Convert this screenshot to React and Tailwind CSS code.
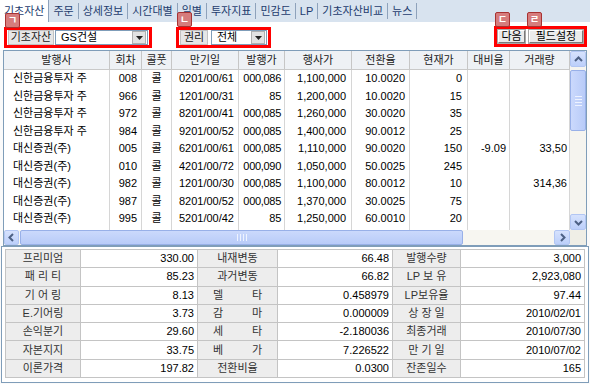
import React from 'react';

const tabs = ['기초자산', '주문', '상세정보', '시간대별', '일별', '투자지표', '민감도', 'LP', '기초자산비교', '뉴스'];

const colDefs = [
  { label: '발행사', w: 'w-[106px]', cell: 'justify-start pl-[9px]' },
  { label: '회차', w: 'w-[32px]', cell: 'justify-end pr-[4px]' },
  { label: '콜풋', w: 'w-[30px]', cell: 'justify-center' },
  { label: '만기일', w: 'w-[67px]', cell: 'justify-end pr-[4px]' },
  { label: '발행가', w: 'w-[46px]', cell: 'justify-end pr-[3px] tracking-[-0.3px]' },
  { label: '행사가', w: 'w-[67px]', cell: 'justify-end pr-[5px]' },
  { label: '전환율', w: 'w-[58px]', cell: 'justify-end pr-[4px]' },
  { label: '현재가', w: 'w-[58px]', cell: 'justify-end pr-[5px]' },
  { label: '대비율', w: 'w-[42px]', cell: 'justify-end pr-[3px]' },
  { label: '거래량', w: 'w-[60px]', cell: 'justify-end pr-[2px]' },
];

const rows = [
  ['신한금융투자 주', '008', '콜', '0201/00/61', '000,086', '1,100,000', '10.0020', '0', '', ''],
  ['신한금융투자 주', '966', '콜', '1201/00/31', '85', '1,200,000', '10.0020', '15', '', ''],
  ['신한금융투자 주', '972', '콜', '8201/00/41', '000,085', '1,260,000', '30.0020', '35', '', ''],
  ['신한금융투자 주', '984', '콜', '9201/00/52', '000,085', '1,400,000', '90.0012', '25', '', ''],
  ['대신증권(주)', '005', '콜', '6201/00/61', '000,085', '1,110,000', '90.0020', '150', '-9.09', '33,50'],
  ['대신증권(주)', '010', '콜', '4201/00/72', '000,090', '1,050,000', '50.0025', '245', '', ''],
  ['대신증권(주)', '982', '콜', '1201/00/30', '000,085', '1,100,000', '80.0012', '10', '', '314,36'],
  ['대신증권(주)', '987', '콜', '8201/00/52', '000,085', '1,370,000', '30.0025', '75', '', ''],
  ['대신증권(주)', '995', '콜', '5201/00/42', '85', '1,250,000', '60.0010', '20', '', ''],
  ['', '', '', '', '', '', '', '', '', ''],
];

const info = [
  ['프리미엄', '330.00', '내재변동', '66.48', '발행수량', '3,000'],
  ['패 리 티', '85.23', '과거변동', '66.82', 'LP 보 유', '2,923,080'],
  ['기 어 링', '8.13', ['델', '타'], '0.458979', 'LP보유율', '97.44'],
  ['E.기어링', '3.73', ['감', '마'], '0.000009', '상 장 일', '2010/02/01'],
  ['손익분기', '29.60', ['세', '타'], '-2.180036', '최종거래', '2010/07/30'],
  ['자본지지', '33.75', ['베', '가'], '7.226522', '만 기 일', '2010/07/02'],
  ['이론가격', '197.82', '전환비율', '0.0300', '잔존일수', '165'],
];

function Tri() {
  return (
    <svg width="7" height="4" viewBox="0 0 7 4">
      <path d="M0 0h7L3.5 4z" fill="#222" />
    </svg>
  );
}

function Combo({ text, w }) {
  return (
    <div className={`flex h-full items-center border border-[#7f9db9] bg-white ${w}`}>
      <span className="flex-1 whitespace-nowrap pl-[5px] text-[11px] leading-none text-black">{text}</span>
      <div className="mr-[1px] flex h-[13px] w-[14px] items-center justify-center border border-[#b0b0b0] bg-[#e2e2e2]">
        <Tri />
      </div>
    </div>
  );
}

function Badge({ ch, pos }) {
  return (
    <div
      className={`absolute flex h-[15px] w-[15px] items-center justify-center rounded-[2px] border border-[#a83232] bg-[#d67c7c] text-[10px] font-bold leading-none text-white ${pos}`}
    >
      {ch}
    </div>
  );
}

function Label({ text, w }) {
  return (
    <div className={`flex h-full items-center justify-center border border-[#c2c2c2] bg-[#e6e6e6] text-[11px] leading-none text-[#222] ${w}`}>
      {text}
    </div>
  );
}

function Btn({ text, w }) {
  return (
    <div
      className={`flex h-full items-center justify-center border border-t-[#ffffff] border-l-[#ffffff] border-r-[#7a7a7a] border-b-[#7a7a7a] bg-[#ebebeb] text-[11px] leading-none text-black shadow-[0_0_0_1px_#a8a8a8] ${w}`}
    >
      {text}
    </div>
  );
}

function Chevron({ dir }) {
  const d = {
    up: 'M3 8 L6.5 4.5 L10 8',
    down: 'M3 5 L6.5 8.5 L10 5',
    left: 'M8 3 L4.5 6.5 L8 10',
    right: 'M5 3 L8.5 6.5 L5 10',
  }[dir];
  return (
    <svg width="13" height="13" viewBox="0 0 13 13">
      <path d={d} fill="none" stroke="#4d6185" strokeWidth="2" />
    </svg>
  );
}

function SBtn({ dir, cls }) {
  return (
    <div className={`flex shrink-0 items-center justify-center rounded-[2px] border border-[#b2c6f3] bg-gradient-to-b from-[#d6e2fd] to-[#bccffa] ${cls}`}>
      <Chevron dir={dir} />
    </div>
  );
}

export default function App() {
  return (
    <div className="h-[384px] w-[590px] overflow-hidden bg-[#fafafa] font-['Liberation_Sans','Noto_Sans_CJK_KR',sans-serif]">
      {/* tab bar */}
      <div className="flex h-[22px] items-center bg-[#d8e3ef]">
        {tabs.map((t, i) => (
          <React.Fragment key={t}>
            <div
              className={`flex h-full items-center px-[4px] text-[11px] leading-none text-[#1e3c6e] ${i === 0 ? 'bg-white' : ''}`}
            >
              {t}
            </div>
            <div className={`w-px bg-[#8ea2bb] ${i === 0 ? 'h-full' : 'h-[16px]'}`} />
          </React.Fragment>
        ))}
      </div>

      {/* toolbar */}
      <div className="flex h-[28px] bg-white">
        <div className="relative ml-[4px] mt-[5px] h-[21px] w-[148px]">
          <div className="flex h-full w-full gap-[1px] border-[3px] border-[#ff0000] pl-[1px]">
            <Label text="기초자산" w="w-[46px]" />
            <Combo text="GS건설" w="w-[93px]" />
          </div>
          <Badge ch="ㄱ" pos="left-[1px] top-[-14px]" />
        </div>

        <div className="relative ml-[24px] mt-[5px] h-[21px] w-[95px]">
          <div className="flex h-full w-full gap-[3px] border-[3px] border-[#ff0000] pl-[1px]">
            <Label text="권리" w="w-[28px]" />
            <Combo text="전체" w="w-[56px]" />
          </div>
          <Badge ch="ㄴ" pos="left-[1px] top-[-15px]" />
        </div>

        <div className="relative ml-auto mr-[3px] mt-[4px] h-[21px] w-[93px]">
          <div className="flex h-full w-full gap-[4px] border-[3px] border-[#ff0000] px-[1px] py-[1px]">
            <Btn text="다음" w="w-[27px]" />
            <Btn text="필드설정" w="w-[54px]" />
          </div>
          <Badge ch="ㄷ" pos="left-[1px] top-[-14px]" />
          <Badge ch="ㄹ" pos="left-[33px] top-[-14px]" />
        </div>
      </div>

      {/* grid */}
      <div className="mx-[3px] flex h-[196px] flex-col border border-[#7f9db9] bg-white">
        <div className="flex h-[179px]">
          <div className="w-[566px] overflow-hidden">
            <div className="flex h-[19px] border-b border-[#c9c9c9] bg-[#eef1f5]">
              {colDefs.map((c) => (
                <div
                  key={c.label}
                  className={`flex shrink-0 items-center justify-center border-r border-[#c6c6c6] text-[11px] leading-none text-[#222] ${c.w}`}
                >
                  {c.label}
                </div>
              ))}
            </div>
            {rows.map((r, ri) => (
              <div key={ri} className="flex h-[17.5px]">
                {r.map((v, ci) => (
                  <div
                    key={ci}
                    className={`flex shrink-0 items-center overflow-hidden whitespace-nowrap border-r border-[#d6d6d6] text-[11px] leading-none text-black ${colDefs[ci].w} ${colDefs[ci].cell}`}
                  >
                    {v}
                  </div>
                ))}
              </div>
            ))}
          </div>
          {/* vertical scrollbar */}
          <div className="flex w-[16px] flex-col bg-[#f5f4ef]">
            <SBtn dir="up" cls="h-[16px] w-[16px]" />
            <div className="flex-1">
              <div className="mt-[3px] flex h-[61px] w-[16px] flex-col items-center justify-center gap-[2px] rounded-[2px] border border-[#98b0e8] bg-gradient-to-r from-[#cbd9fc] to-[#b8cbf8]">
                <div className="h-px w-[7px] bg-[#eef3ff]" />
                <div className="h-px w-[7px] bg-[#eef3ff]" />
                <div className="h-px w-[7px] bg-[#eef3ff]" />
                <div className="h-px w-[7px] bg-[#eef3ff]" />
              </div>
            </div>
            <SBtn dir="down" cls="h-[16px] w-[16px]" />
          </div>
        </div>
        {/* horizontal scrollbar */}
        <div className="flex h-[15px]">
          <div className="flex w-[566px] bg-[#f7f6f1]">
            <SBtn dir="left" cls="h-[15px] w-[15px]" />
            <div className="flex-1">
              <div className="ml-[1px] flex h-[15px] w-[443px] items-center justify-center gap-[2px] rounded-[2px] border border-[#98b0e8] bg-gradient-to-b from-[#cbd9fc] to-[#b8cbf8]">
                <div className="h-[7px] w-px bg-[#eef3ff]" />
                <div className="h-[7px] w-px bg-[#eef3ff]" />
                <div className="h-[7px] w-px bg-[#eef3ff]" />
                <div className="h-[7px] w-px bg-[#eef3ff]" />
              </div>
            </div>
            <SBtn dir="right" cls="h-[15px] w-[16px]" />
          </div>
          <div className="w-[16px] bg-[#efeee6]" />
        </div>
      </div>

      {/* info panel */}
      <div className="mx-[1px] h-[137px] border border-[#7f9db9] bg-white px-[3px] pt-[2px]">
        <div className="grid h-[129px] w-[580px] grid-cols-[74px_116px_79px_114px_67px_1fr] grid-rows-7 gap-px bg-[#c4c4c4] p-px">
          {info.map((r, ri) =>
            r.map((v, ci) => {
              const isLabel = ci % 2 === 0;
              if (isLabel) {
                if (Array.isArray(v)) {
                  return (
                    <div key={`${ri}-${ci}`} className="flex items-center justify-between bg-[#ededed] px-[15px] text-[11px] leading-none text-[#333]">
                      <span>{v[0]}</span>
                      <span>{v[1]}</span>
                    </div>
                  );
                }
                return (
                  <div key={`${ri}-${ci}`} className="flex items-center justify-center whitespace-pre bg-[#ededed] text-[11px] leading-none text-[#333]">
                    {v}
                  </div>
                );
              }
              return (
                <div key={`${ri}-${ci}`} className="flex items-center justify-end bg-white pr-[3px] text-[11px] leading-none text-black">
                  {v}
                </div>
              );
            })
          )}
        </div>
      </div>
    </div>
  );
}
